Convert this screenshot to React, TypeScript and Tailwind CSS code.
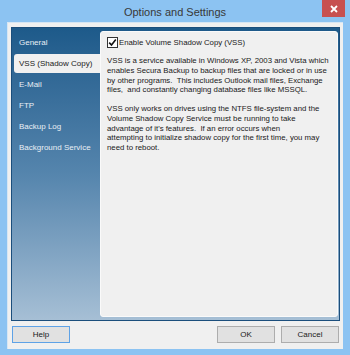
import React from 'react';

const items = ['General', 'VSS (Shadow Copy)', 'E-Mail', 'FTP', 'Backup Log', 'Background Service'];

const Btn: React.FC<{ label: string; focused?: boolean }> = ({ label, focused }) => (
  <button
    className={`w-[58px] h-[17px] bg-[#e1e1e1] text-[8px] text-[#1a1a1a] border ${
      focused ? 'border-[#5ea2e6]' : 'border-[#adadad]'
    }`}
  >
    {label}
  </button>
);

const App: React.FC = () => {
  return (
    <div
      className="w-[350px] h-[355px] bg-[#8cc3f2] flex flex-col"
      style={{ fontFamily: '"Liberation Sans", Arial, sans-serif' }}
    >
      {/* Title bar */}
      <div className="relative h-[22px] flex items-center justify-center">
        <span className="text-[11px] text-[#383838] pt-[3px]">Options and Settings</span>
        <div className="absolute top-0 right-[5px] w-[23px] h-[17px] bg-[#c75050] flex items-center justify-center">
          <svg width="8" height="8" viewBox="0 0 8 8">
            <path d="M1 1 L7 7 M7 1 L1 7" stroke="#fff" strokeWidth="1.8" />
          </svg>
        </div>
      </div>

      {/* Client area */}
      <div className="flex-1 mx-[7px] mb-[6px] bg-[#f0f0f0] border-t border-l border-[#d6e6f4] flex flex-col px-[3px] pt-[4px]">
        <div className="h-[294px] flex bg-gradient-to-b from-[#1d5a8a] via-[#5585ad] to-[#a6bfd5] border border-[#1b4e7c]">
          {/* Sidebar */}
          <div className="w-[88px] pt-[4px] flex flex-col">
            {items.map((it, i) => (
              <div key={it} className="h-[21px] flex items-center pl-[2px]">
                {i === 1 ? (
                  <div className="w-full h-[19px] bg-[#f0f0f0] rounded-l-[3px] flex items-center pl-[5px] text-[8px] text-[#1a1a1a] whitespace-nowrap">
                    {it}
                  </div>
                ) : (
                  <span className="pl-[5px] text-[8px] text-[#e9eff5] whitespace-nowrap">{it}</span>
                )}
              </div>
            ))}
          </div>

          {/* Content panel */}
          <div className="flex-1 mt-[3px] mr-[1px] mb-[3px] bg-[#f0f0f0] rounded-[3px] border border-[#fafafa] pl-[6px] pr-[4px] pt-[5px] text-[7.8px] text-[#1a1a1a]">
            <div className="flex items-center gap-[1px] h-[11px]">
              <div className="w-[11px] h-[11px] bg-white border border-[#333] flex items-center justify-center">
                <svg width="9" height="9" viewBox="0 0 9 9">
                  <path d="M1.2 4.6 L3.5 7 L7.8 1.5" fill="none" stroke="#111" strokeWidth="1.6" />
                </svg>
              </div>
              <span className="whitespace-nowrap">Enable Volume Shadow Copy (VSS)</span>
            </div>
            <p className="mt-[8px] leading-[9.75px] whitespace-nowrap">
              VSS is a service available in Windows XP, 2003 and Vista which
              <br />
              enables Secura Backup to backup files that are locked or in use
              <br />
              by other programs.&nbsp; This includes Outlook mail files, Exchange
              <br />
              files,&nbsp; and constantly changing database files like MSSQL.
            </p>
            <p className="mt-[9px] leading-[9.75px] whitespace-nowrap">
              VSS only works on drives using the NTFS file-system and the
              <br />
              Volume Shadow Copy Service must be running to take
              <br />
              advantage of it's features.&nbsp; If an error occurs when
              <br />
              attempting to initialize shadow copy for the first time, you may
              <br />
              need to reboot.
            </p>
          </div>
        </div>

        {/* Buttons */}
        <div className="flex items-center px-[1px] mt-[5px]">
          <Btn label="Help" focused />
          <div className="flex-1" />
          <div className="flex gap-[6px]">
            <Btn label="OK" />
            <Btn label="Cancel" />
          </div>
        </div>
      </div>
    </div>
  );
};

export default App;
